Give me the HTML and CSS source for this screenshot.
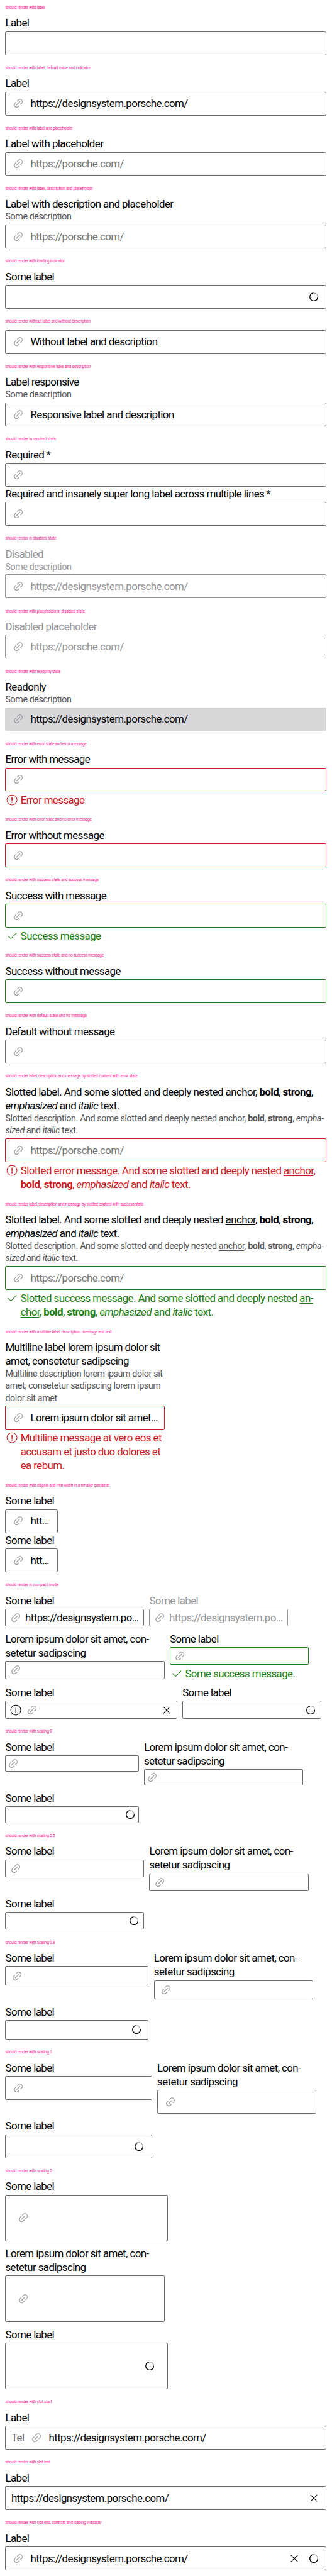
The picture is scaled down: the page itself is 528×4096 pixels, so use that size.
FILE: index.html
```html
<!DOCTYPE html>
<html lang="en">
<head>
<meta charset="utf-8">
<title>Text field states</title>
<link rel="stylesheet" href="styles.css">
</head>
<body>
<svg class="sprite" aria-hidden="true">
  <symbol id="link" viewBox="0 0 24 24"><path d="M8.8 15.2l6.4-6.4M10.1 8.2l1.87-1.83a4 4 0 0 1 5.66 5.66L15.8 13.9M13.9 15.8l-1.87 1.83a4 4 0 0 1-5.66-5.66L8.2 10.1" fill="none" stroke="currentColor" stroke-width="1.3"/></symbol>
  <symbol id="info" viewBox="0 0 24 24"><circle cx="12" cy="12" r="8.6" fill="none" stroke="currentColor" stroke-width="1.1"/><path d="M11.4 8h1.2v1.2h-1.2zM11.4 10.1h1.2v5.8h-1.2z" fill="currentColor"/></symbol>
  <symbol id="error" viewBox="0 0 24 24"><circle cx="12" cy="12" r="8.6" fill="none" stroke="currentColor" stroke-width="1.1"/><path d="M11 7.4h2l-.4 6.6h-1.2zM11.1 15h1.8v1.7h-1.8z" fill="currentColor"/></symbol>
  <symbol id="check" viewBox="0 0 24 24"><path d="M4.9 11.8l5.2 5L19.7 7.1" fill="none" stroke="currentColor" stroke-width="1.1"/></symbol>
  <symbol id="close" viewBox="0 0 24 24"><path d="M6.3 6.3l11.4 11.4M17.7 6.3L6.3 17.7" fill="none" stroke="currentColor" stroke-width="1.15"/></symbol>
  <symbol id="spinner" viewBox="0 0 24 24"><circle cx="12" cy="12" r="6.9" fill="none" stroke="#949598" stroke-width="1.2"/><path d="M18.9 12A6.9 6.9 0 1 1 10.8 5.2" fill="none" stroke="currentColor" stroke-width="1.4"/></symbol>
</svg>

<section><h2>should render with label</h2>
<div class="field"><label>Label</label><div class="box"></div></div></section>

<section><h2>should render with label, default value and indicator</h2>
<div class="field"><label>Label</label><div class="box"><svg class="icon"><use href="#link"/></svg><span class="value">https://designsystem.porsche.com/</span></div></div></section>

<section><h2>should render with label and placeholder</h2>
<div class="field"><label>Label with placeholder</label><div class="box"><svg class="icon"><use href="#link"/></svg><span class="value placeholder">https://porsche.com/</span></div></div></section>

<section><h2>should render with label, description and placeholder</h2>
<div class="field"><label>Label with description and placeholder</label><p class="desc">Some description</p><div class="box"><svg class="icon"><use href="#link"/></svg><span class="value placeholder">https://porsche.com/</span></div></div></section>

<section><h2>should render with loading indicator</h2>
<div class="field"><label>Some label</label><div class="box"><svg class="icon end"><use href="#spinner"/></svg></div></div></section>

<section><h2>should render without label and without description</h2>
<div class="field"><div class="box"><svg class="icon"><use href="#link"/></svg><span class="value">Without label and description</span></div></div></section>

<section><h2>should render with responsive label and description</h2>
<div class="field"><label>Label responsive</label><p class="desc">Some description</p><div class="box"><svg class="icon"><use href="#link"/></svg><span class="value">Responsive label and description</span></div></div></section>

<section><h2>should render in required state</h2>
<div class="field"><label>Required<span class="star"> *</span></label><div class="box"><svg class="icon"><use href="#link"/></svg></div></div>
<div class="field"><label>Required and insanely super long label across multiple lines<span class="star"> *</span></label><div class="box"><svg class="icon"><use href="#link"/></svg></div></div></section>

<section><h2>should render in disabled state</h2>
<div class="field disabled"><label>Disabled</label><p class="desc">Some description</p><div class="box"><svg class="icon"><use href="#link"/></svg><span class="value">https://designsystem.porsche.com/</span></div></div></section>

<section><h2>should render with placeholder in disabled state</h2>
<div class="field disabled"><label>Disabled placeholder</label><div class="box"><svg class="icon"><use href="#link"/></svg><span class="value">https://porsche.com/</span></div></div></section>

<section><h2>should render with readonly state</h2>
<div class="field readonly"><label>Readonly</label><p class="desc">Some description</p><div class="box"><svg class="icon"><use href="#link"/></svg><span class="value">https://designsystem.porsche.com/</span></div></div></section>

<section><h2>should render with error state and error message</h2>
<div class="field error"><label>Error with message</label><div class="box"><svg class="icon"><use href="#link"/></svg></div>
<div class="message"><svg class="icon"><use href="#error"/></svg><p>Error message</p></div></div></section>

<section><h2>should render with error state and no error message</h2>
<div class="field error"><label>Error without message</label><div class="box"><svg class="icon"><use href="#link"/></svg></div></div></section>

<section><h2>should render with success state and success message</h2>
<div class="field success"><label>Success with message</label><div class="box"><svg class="icon"><use href="#link"/></svg></div>
<div class="message"><svg class="icon"><use href="#check"/></svg><p>Success message</p></div></div></section>

<section><h2>should render with success state and no success message</h2>
<div class="field success"><label>Success without message</label><div class="box"><svg class="icon"><use href="#link"/></svg></div></div></section>

<section><h2>should render with default state and no message</h2>
<div class="field"><label>Default without message</label><div class="box"><svg class="icon"><use href="#link"/></svg></div></div></section>

<section><h2>should render label, description and message by slotted content with error state</h2>
<div class="field error"><label>Slotted label. And some slotted and deeply nested <a>anchor</a>, <b>bold</b>, <strong>strong</strong>,<br><em>emphasized</em> and <i>italic</i> text.</label><p class="desc">Slotted description. And some slotted and deeply nested <a>anchor</a>, <b>bold</b>, <strong>strong</strong>, <em>empha-<br>sized</em> and <i>italic</i> text.</p><div class="box"><svg class="icon"><use href="#link"/></svg><span class="value placeholder">https://porsche.com/</span></div>
<div class="message"><svg class="icon"><use href="#error"/></svg><p>Slotted error message. And some slotted and deeply nested <a>anchor</a>,<br><b>bold</b>, <strong>strong</strong>, <em>emphasized</em> and <i>italic</i> text.</p></div></div></section>

<section><h2>should render label, description and message by slotted content with success state</h2>
<div class="field success"><label>Slotted label. And some slotted and deeply nested <a>anchor</a>, <b>bold</b>, <strong>strong</strong>,<br><em>emphasized</em> and <i>italic</i> text.</label><p class="desc">Slotted description. And some slotted and deeply nested <a>anchor</a>, <b>bold</b>, <strong>strong</strong>, <em>empha-<br>sized</em> and <i>italic</i> text.</p><div class="box"><svg class="icon"><use href="#link"/></svg><span class="value placeholder">https://porsche.com/</span></div>
<div class="message"><svg class="icon"><use href="#check"/></svg><p>Slotted success message. And some slotted and deeply nested <a>an-<br>chor</a>, <b>bold</b>, <strong>strong</strong>, <em>emphasized</em> and <i>italic</i> text.</p></div></div></section>

<section><h2>should render with multiline label, description, message and text</h2>
<div class="field error w480"><label>Multiline label lorem ipsum dolor sit<br>amet, consetetur sadipscing</label><p class="desc">Multiline description lorem ipsum dolor sit<br>amet, consetetur sadipscing lorem ipsum<br>dolor sit amet</p><div class="box"><svg class="icon"><use href="#link"/></svg><span class="value">Lorem ipsum dolor sit amet…</span></div>
<div class="message"><svg class="icon"><use href="#error"/></svg><p>Multiline message at vero eos et<br>accusam et justo duo dolores et<br>ea rebum.</p></div></div></section>

<section><h2>should render with ellipsis and min-width in a smaller container</h2>
<div class="field w158"><label>Some label</label><div class="box"><svg class="icon"><use href="#link"/></svg><span class="value">htt…</span></div></div>
<div class="field w158"><label>Some label</label><div class="box"><svg class="icon"><use href="#link"/></svg><span class="value">htt…</span></div></div></section>

<section><h2>should render in compact mode</h2>
<div class="rows compact">
<div class="row">
<div class="field w418"><label>Some label</label><div class="box"><svg class="icon"><use href="#link"/></svg><span class="value">https://designsystem.po…</span></div></div>
<div class="field disabled w418"><label>Some label</label><div class="box"><svg class="icon"><use href="#link"/></svg><span class="value">https://designsystem.po…</span></div></div>
</div>
<div class="row">
<div class="field w480"><label>Lorem ipsum dolor sit amet, con-<br>setetur sadipscing</label><div class="box"><svg class="icon"><use href="#link"/></svg></div></div>
<div class="field success w418"><label>Some label</label><div class="box"><svg class="icon"><use href="#link"/></svg></div>
<div class="message"><svg class="icon"><use href="#check"/></svg><p>Some success message.</p></div></div>
</div>
<div class="row">
<div class="field w518"><label>Some label</label><div class="box"><svg class="icon dark"><use href="#info"/></svg><svg class="icon"><use href="#link"/></svg><svg class="icon end"><use href="#close"/></svg></div></div>
<div class="field w418"><label>Some label</label><div class="box"><svg class="icon end"><use href="#spinner"/></svg></div></div>
</div>
</div></section>

<section><h2>should render with scaling 0</h2>
<div class="rows scale-0">
<div class="row">
<div class="field w402"><label>Some label</label><div class="box"><svg class="icon"><use href="#link"/></svg></div></div>
<div class="field w480"><label>Lorem ipsum dolor sit amet, con-<br>setetur sadipscing</label><div class="box"><svg class="icon"><use href="#link"/></svg></div></div>
</div>
<div class="field w402"><label>Some label</label><div class="box"><svg class="icon end"><use href="#spinner"/></svg></div></div>
</div></section>

<section><h2>should render with scaling 0.5</h2>
<div class="rows compact">
<div class="row">
<div class="field w418"><label>Some label</label><div class="box"><svg class="icon"><use href="#link"/></svg></div></div>
<div class="field w480"><label>Lorem ipsum dolor sit amet, con-<br>setetur sadipscing</label><div class="box"><svg class="icon"><use href="#link"/></svg></div></div>
</div>
<div class="field w418"><label>Some label</label><div class="box"><svg class="icon end"><use href="#spinner"/></svg></div></div>
</div></section>

<section><h2>should render with scaling 0.8</h2>
<div class="rows scale-8">
<div class="row">
<div class="field w432"><label>Some label</label><div class="box"><svg class="icon"><use href="#link"/></svg></div></div>
<div class="field w480"><label>Lorem ipsum dolor sit amet, con-<br>setetur sadipscing</label><div class="box"><svg class="icon"><use href="#link"/></svg></div></div>
</div>
<div class="field w432"><label>Some label</label><div class="box"><svg class="icon end"><use href="#spinner"/></svg></div></div>
</div></section>

<section><h2>should render with scaling 1</h2>
<div class="rows">
<div class="row">
<div class="field w442"><label>Some label</label><div class="box"><svg class="icon"><use href="#link"/></svg></div></div>
<div class="field w480"><label>Lorem ipsum dolor sit amet, con-<br>setetur sadipscing</label><div class="box"><svg class="icon"><use href="#link"/></svg></div></div>
</div>
<div class="field w442"><label>Some label</label><div class="box"><svg class="icon end"><use href="#spinner"/></svg></div></div>
</div></section>

<section><h2>should render with scaling 2</h2>
<div class="rows scale-20">
<div class="field w490"><label>Some label</label><div class="box"><svg class="icon"><use href="#link"/></svg></div></div>
<div class="field w480"><label>Lorem ipsum dolor sit amet, con-<br>setetur sadipscing</label><div class="box"><svg class="icon"><use href="#link"/></svg></div></div>
<div class="field w490"><label>Some label</label><div class="box"><svg class="icon end"><use href="#spinner"/></svg></div></div>
</div></section>

<section><h2>should render with slot start</h2>
<div class="field"><label>Label</label><div class="box"><span class="value unit">Tel</span><svg class="icon"><use href="#link"/></svg><span class="value">https://designsystem.porsche.com/</span></div></div></section>

<section><h2>should render with slot end</h2>
<div class="field"><label>Label</label><div class="box"><span class="value">https://designsystem.porsche.com/</span><svg class="icon end"><use href="#close"/></svg></div></div></section>

<section><h2>should render with slot end, controls and loading indicator</h2>
<div class="field"><label>Label</label><div class="box"><svg class="icon"><use href="#link"/></svg><span class="value">https://designsystem.porsche.com/</span><svg class="icon end"><use href="#close"/></svg><svg class="icon dark"><use href="#spinner"/></svg></div></div></section>
</body>
</html>
```
FILE: styles.css
```css
:root {
  font-size: 5.2763px;
  --text: #010205;
  --muted: #535457;
  --border: #6b6d70;
  --disabled: #949598;
  --error: #cc1922;
  --success: #197e10;
}

* {
  box-sizing: border-box;
  margin: 0;
  padding: 0;
}

body {
  background: #fff;
  color: var(--text);
  font-family: Roboto, "Liberation Sans", sans-serif;
  font-size: 3.2rem;
  line-height: 4.2rem;
  letter-spacing: -0.034em;
  white-space: nowrap;
}

.sprite {
  display: none;
}

section {
  width: 100rem;
  padding: 0 1.6rem 1.6rem;
}

h2 {
  height: 4.8rem;
  line-height: 4.8rem;
  font-size: 1.2rem;
  font-weight: 400;
  letter-spacing: -0.026em;
  color: #ff1493;
}

label {
  display: block;
  margin-bottom: 0.4rem;
}

.desc {
  margin: -0.4rem 0 0.4rem;
  font-size: 2.7rem;
  line-height: 3.645rem;
  letter-spacing: -0.026em;
  color: var(--muted);
}

a {
  text-decoration: underline;
  text-decoration-thickness: 1px;
  text-underline-offset: 0.4rem;
}

.star {
  letter-spacing: -0.06em;
}

.box {
  display: flex;
  align-items: center;
  gap: 1.6rem;
  height: 7.2rem;
  padding: 0 1.6rem;
  border: 1px solid var(--border);
  border-radius: 0.4rem;
}

.icon {
  flex: none;
  width: 4.2rem;
  height: 4.2rem;
}

.box .icon {
  color: var(--disabled);
}

.box .icon.dark,
.box .icon.end {
  color: var(--text);
}

.icon.end {
  margin-left: auto;
}

.placeholder {
  color: #757575;
}

.unit {
  color: var(--border);
}

.message {
  display: flex;
  gap: 0.4rem;
  padding-top: 0.4rem;
}

.disabled label,
.disabled .desc,
.disabled .value {
  color: var(--disabled);
}

.disabled .box {
  border-color: var(--disabled);
}

.readonly .box {
  border-color: #d8d8db;
  background: #d8d8db;
}

.error .box {
  border-color: var(--error);
}

.error .message {
  color: var(--error);
}

.success .box {
  border-color: var(--success);
}

.success .message {
  color: var(--success);
}

.rows {
  display: flex;
  flex-direction: column;
  gap: 1.6rem;
}

.row {
  display: flex;
  align-items: flex-start;
  gap: 1.6rem;
}

.compact .box {
  height: 5.4rem;
  padding: 0 0.8rem;
  gap: 0.8rem;
}

.scale-0 .box {
  height: 5rem;
  padding: 0 0.2rem;
}

.scale-8 .box {
  height: 5.83rem;
  padding: 0 1.3rem;
}

.scale-20 .box {
  height: 14rem;
  padding: 0 3.2rem;
}

.w158 { width: 15.8rem; }
.w402 { width: 40.2rem; }
.w418 { width: 41.8rem; }
.w432 { width: 43.2rem; }
.w442 { width: 44.2rem; }
.w480 { width: 48rem; }
.w490 { width: 49rem; }
.w518 { width: 51.8rem; }
```
